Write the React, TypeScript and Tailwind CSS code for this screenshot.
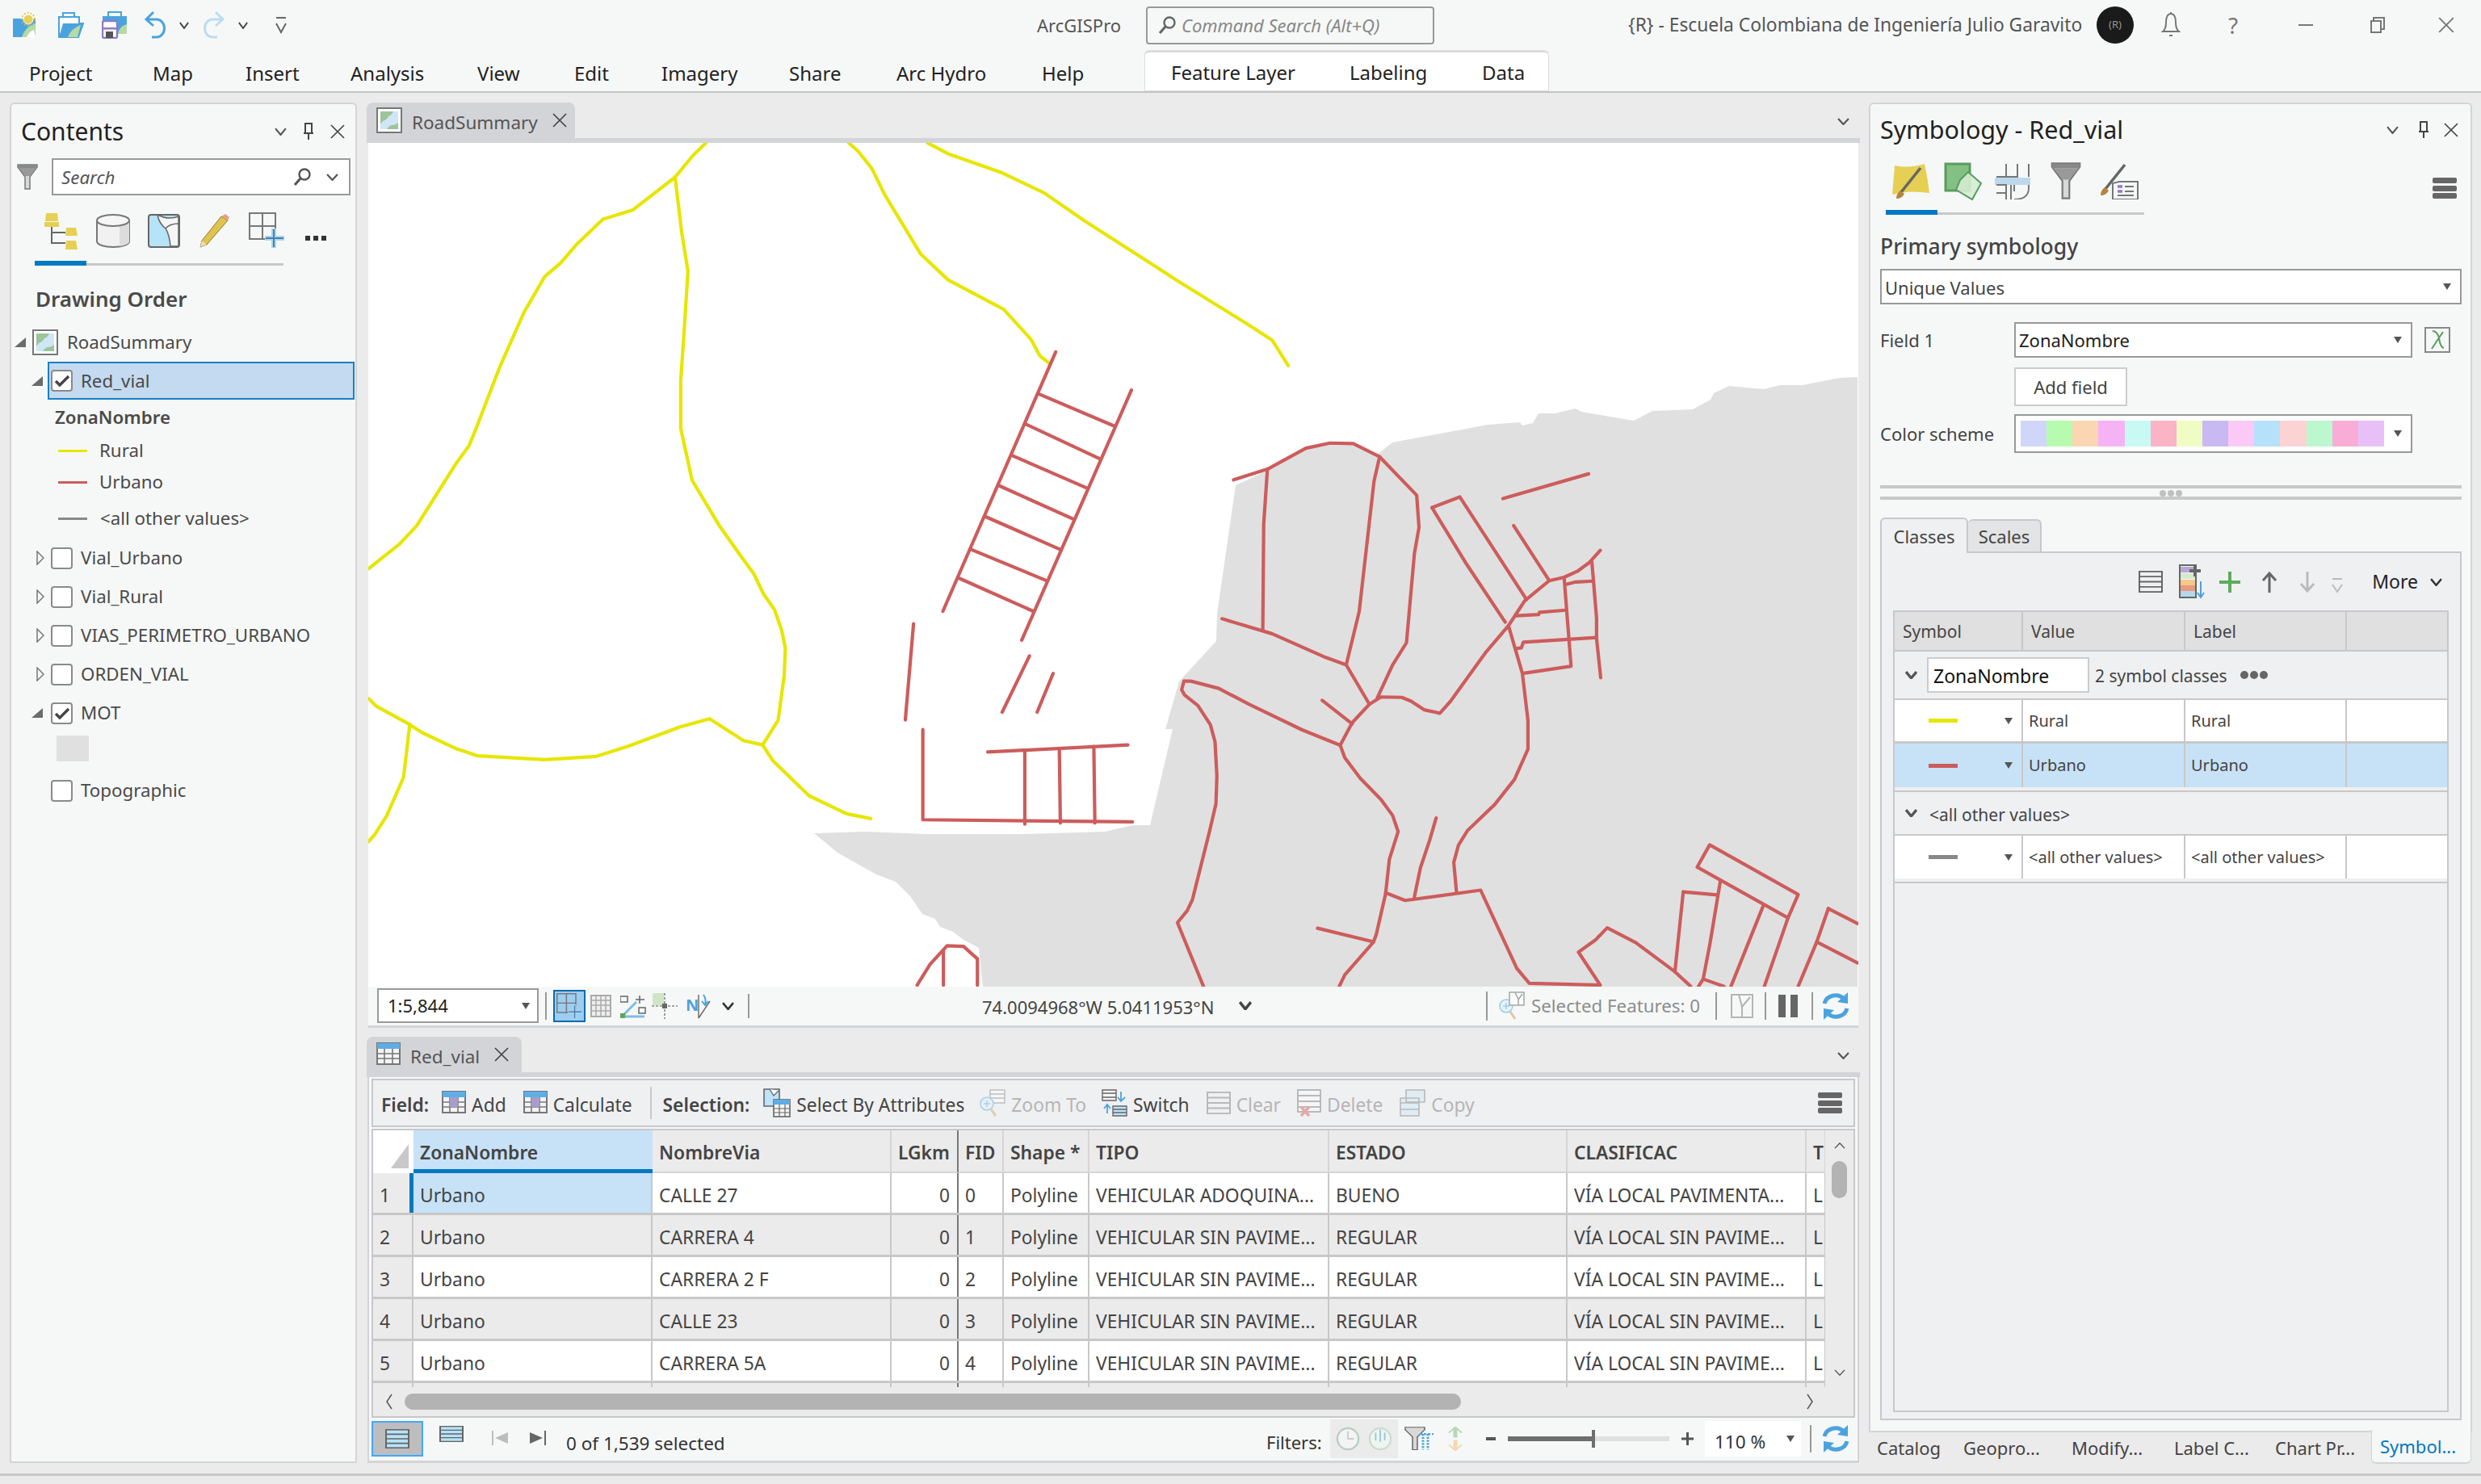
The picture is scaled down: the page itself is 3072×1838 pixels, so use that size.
import React from 'react';

type Pts = number[];
const pts = (p: Pts) => p.reduce((s, v, i) => s + v + (i % 2 ? ' ' : ','), '');

// map roads, in crop coordinates of the two map areas
const yellowA: Pts[] = [
  [10,805,70,760,103,727,178,615,205,580,218,550,265,435,312,335,352,270,383,245,415,210,465,165,523,148,605,88,640,48,665,25],
  [605,88,618,190,630,260,622,380,616,460,616,548,638,643,690,725,735,785,757,813,777,852,798,880,812,918,819,950,817,1000,805,1083,775,1128],
  [10,1043,25,1057,85,1088,115,1106,178,1134,222,1148,352,1155,452,1149,515,1130,615,1095,672,1080,738,1120,775,1128,795,1157,865,1221,938,1254,985,1263],
  [90,1090,78,1187,45,1258,22,1292,10,1305],
  [942,25,960,40,987,72,1012,120,1082,229,1135,276,1243,330,1296,385,1313,415,1333,430],
  [1095,25,1135,45,1240,80,1322,117,1400,168,1568,270],
];
const redA: Pts[] = [
  [1344,408,1125,883],[1491,478,1278,936],[1311,485,1458,544],[1285,540,1430,604],[1260,598,1406,658],[1234,653,1380,715],[1208,710,1353,770],[1180,770,1326,827],[1155,822,1300,883],
  [1068,906,1052,1082],[1293,965,1240,1068],[1339,997,1308,1068],
  [1086,1100,1086,1265,1493,1269],[1212,1141,1484,1128],[1284,1138,1284,1273],[1351,1135,1353,1271],[1418,1131,1420,1271],
  [1075,1568,1100,1530,1133,1496,1165,1497,1192,1520,1192,1568],[1126,1505,1126,1568],
];
const redB: Pts[] = [
  [222,367,295,342,378,293,430,281,480,282,537,313,617,403,622,478,612,540,595,748,565,800,532,877],
  [295,342,287,470,285,720],
  [197,692,305,727,415,780,465,800,493,675,525,370,537,313],
  [465,800,515,892],
  [115,838,110,858,116,870,145,895,172,940,182,980,186,1060,184,1125,170,1190,133,1350,122,1375,101,1403,157,1552],
  [115,838,130,838,190,855,255,892,370,952,452,988,478,935,515,892,540,875,585,876,605,885,633,905,667,913,690,885,765,772,815,708,832,680,850,650,903,603,935,595,965,580,990,560,1013,532],
  [413,883,478,938],
  [452,988,462,1017,495,1065,540,1115,565,1152,577,1190,558,1255,550,1335,530,1430,524,1448,462,1525,450,1552],
  [524,1448,403,1416],
  [550,1333,592,1351,755,1327,833,1510,860,1545,1013,1549,966,1472,1003,1443,1028,1415,1090,1450,1172,1516,1208,1552],
  [612,1343,625,1275,645,1210,659,1158],
  [703,1333,697,1262,707,1222,727,1187,785,1127,828,1068,857,997,857,930,845,820,815,708],
  [845,820,950,803,935,595],
  [650,432,710,407,854,647],[650,432,722,560,808,700],[803,411,988,353],[826,474,903,603],
  [938,612,960,606,997,604],[995,560,1005,690,1005,738,1014,830],[832,685,880,682,882,677,938,672],[830,762,843,760,847,747,1005,736],
  [1249,1221,1440,1337,1418,1392,1222,1273,1249,1221],[1272,1306,1250,1450,1235,1535,1225,1552],[1192,1331,1265,1338],[1192,1331,1174,1518],
  [1364,1365,1295,1552],[1418,1392,1367,1552],[1235,1535,1280,1552],[1505,1370,1568,1405],[1505,1370,1480,1448,1440,1552],[1480,1448,1568,1497],
];
const land = '1008,1032 1072,1030 1145,1033 1266,1033 1368,1030 1403,1022 1424,1022 1452,903 1443,903 1460,844 1506,794 1507,760 1530,601 1569,583 1618,556 1647,551 1675,551 1704,564 1724,548 1842,526 1882,523 1885,527 1898,524 1905,512 1925,512 1951,506 1958,510 2023,521 2046,509 2096,507 2118,495 2122,487 2141,478 2184,482 2204,477 2232,477 2278,468 2300,467 2300,1222 1217,1222 1212,1174 1193,1164 1180,1154 1164,1148 1158,1138 1142,1132 1127,1110 1109,1092 1085,1083 1037,1056';

const Road = ({ p, c, w = 4.2 }: { p: Pts; c: string; w?: number }) => (
  <polyline points={pts(p)} fill="none" stroke={c} strokeWidth={w} strokeLinejoin="round" strokeLinecap="round" vectorEffect="non-scaling-stroke" />
);

const MapView = () => (
  <svg width="1845" height="1045" viewBox="456 177 1845 1045" className="block bg-white">
    <polygon points={land} fill="#e0e0e0" />
    <g transform="translate(450 160) scale(0.6378 0.6761)">
      {yellowA.map((p, i) => <Road key={i} p={p} c="#e6e600" />)}
      {redA.map((p, i) => <Road key={i} p={p} c="#cd5c5c" />)}
    </g>
    <g transform="translate(1400 400) scale(0.574 0.5294)">
      <Road p={[87,-108,248,0,305,40,340,100]} c="#e6e600" />
      {redB.map((p, i) => <Road key={i} p={p} c="#cd5c5c" />)}
    </g>
  </svg>
);

// small glyph helpers
const Chev = ({ w = 14, h = 9, c = '#555', up = false, sw = 2 }: { w?: number; h?: number; c?: string; up?: boolean; sw?: number }) => (
  <svg width={w} height={h} viewBox="0 0 14 9" preserveAspectRatio="none" className="shrink-0">
    <polyline points={up ? '1,8 7,1 13,8' : '1,1 7,8 13,1'} fill="none" stroke={c} strokeWidth={sw} />
  </svg>
);
const Caret = ({ c = '#555' }: { c?: string }) => (
  <svg width="10" height="10" viewBox="0 0 10 10" className="shrink-0"><polygon points="0,1 10,1 5,9" fill={c} /></svg>
);
const Close = ({ s = 20, c = '#444' }: { s?: number; c?: string }) => (
  <svg width={s} height={s} viewBox="0 0 20 20" className="shrink-0"><path d="M2 2 L18 18 M18 2 L2 18" stroke={c} strokeWidth="1.7" /></svg>
);
const Pin = () => (
  <svg width="14" height="22" viewBox="0 0 14 22" className="shrink-0"><path d="M3 1 H11 V13 H3 Z M1 13 H13 M7 13 V21" fill="none" stroke="#444" strokeWidth="2" /></svg>
);
const Hamburger = () => (
  <svg width="30" height="26" viewBox="0 0 30 26" className="shrink-0"><rect y="0" width="30" height="7" rx="2" fill="#666" /><rect y="10" width="30" height="7" rx="2" fill="#666" /><rect y="19" width="30" height="7" rx="2" fill="#666" /></svg>
);
const Search = ({ c = '#555' }: { c?: string }) => (
  <svg width="24" height="24" viewBox="0 0 24 24" className="shrink-0"><circle cx="15" cy="9" r="6.5" fill="none" stroke={c} strokeWidth="2.4" /><path d="M10 14 L3 22" stroke={c} strokeWidth="3.2" /></svg>
);
const Refresh = () => (
  <svg width="34" height="34" viewBox="0 0 34 34" className="shrink-0"><path d="M3 14 A14 13 0 0 1 27 8 M31 20 A14 13 0 0 1 7 26" fill="none" stroke="#4aa3df" strokeWidth="5" /><polygon points="32,0 32,14 19,12" fill="#4aa3df" /><polygon points="2,34 2,20 15,22" fill="#4aa3df" /></svg>
);
const Funnel = ({ w = 26, h = 32 }: { w?: number; h?: number }) => (
  <svg width={w} height={h} viewBox="0 0 26 32" className="shrink-0"><polygon points="1,1 25,1 25,4 16,16 16,31 10,31 10,16 1,4" fill="#d8d8d8" stroke="#777" strokeWidth="1.5" /><polygon points="1,1 25,1 25,5 1,5" fill="#888" /><polygon points="2,5 24,5 16,15 10,15" fill="#999" /></svg>
);
const MapThumb = ({ s = 32, h = 32 }: { s?: number; h?: number }) => (
  <svg width={s} height={h} viewBox="0 0 32 32" preserveAspectRatio="none" className="shrink-0">
    <rect x="1" y="1" width="30" height="30" fill="#fff" stroke="#777" strokeWidth="2" />
    <rect x="5" y="5" width="22" height="22" fill="#cfe6f5" />
    <path d="M5 5 H21 Q19 10 15 11 Q13 15 8 17 L5 21 Z" fill="#9dc49b" />
    <path d="M27 27 H13 Q17 21 22 22 L27 19 Z" fill="#9dc49b" />
  </svg>
);
const TableIcon = ({ head = '#5eaee6', extra, dim = false, w = 30, h = 30 }: { head?: string; extra?: React.ReactNode; dim?: boolean; w?: number; h?: number }) => (
  <svg width={w} height={h} viewBox="0 0 30 30" className={dim ? 'shrink-0 opacity-40' : 'shrink-0'}>
    <rect x="1" y="1" width="28" height="26" fill="#f4f4f4" stroke="#777" strokeWidth="2" />
    <rect x="1" y="1" width="28" height="7" fill={head} />
    <path d="M1 14 H29 M1 20 H29 M10 8 V27 M20 8 V27" stroke="#777" strokeWidth="1.6" />
    {extra}
  </svg>
);
const Rows = ({ c = '#777', fill = 'none', dim = false, w = 30, h = 30, sw = 2 }: { c?: string; fill?: string; dim?: boolean; w?: number; h?: number; sw?: number }) => (
  <svg width={w} height={h} viewBox="0 0 30 30" preserveAspectRatio="none" className={dim ? 'shrink-0 opacity-45' : 'shrink-0'}>
    <rect x="1" y="1" width="28" height="28" fill={fill} stroke={c} strokeWidth={sw} />
    <path d="M1 8 H29 M1 15 H29 M1 22 H29" stroke={c} strokeWidth={sw} />
  </svg>
);

// quick access icons
const NewProject = () => (
  <svg width="32" height="32" viewBox="0 0 32 32" className="shrink-0">
    <rect x="1" y="8" width="28" height="23" fill="#4aa3df" /><path d="M12 31 Q16 18 29 14 V31 Z" fill="#b6d9a5" /><path d="M18 31 Q21 24 27 22 L29 31Z" fill="#fff" />
    <circle cx="20" cy="9" r="6" fill="#e8cf5a" stroke="#fff" strokeWidth="1" /><circle cx="20" cy="9" r="8" fill="none" stroke="#d8b93c" strokeWidth="1.4" strokeDasharray="2 2" />
  </svg>
);
const OpenProject = () => (
  <svg width="34" height="32" viewBox="0 0 34 32" className="shrink-0">
    <path d="M8 6 V1 H22 V6" fill="none" stroke="#4aa3df" strokeWidth="2" /><path d="M3 6 H28 V14 H33 L27 31 H3 Z" fill="#fff" stroke="#4aa3df" strokeWidth="2" />
    <path d="M3 31 L8 14 H33 L27 31 Z" fill="#4aa3df" /><path d="M14 31 Q18 20 30 16 L26 31 Z" fill="#b6d9a5" />
  </svg>
);
const SaveProject = () => (
  <svg width="32" height="34" viewBox="0 0 32 34" className="shrink-0">
    <path d="M8 6 V1 H24 V6" fill="none" stroke="#4aa3df" strokeWidth="2" /><rect x="1" y="6" width="30" height="22" fill="#4aa3df" />
    <path d="M20 28 Q22 18 31 16 V28 Z" fill="#b6d9a5" /><rect x="1" y="12" width="18" height="21" rx="2" fill="#fff" stroke="#8e7cc3" strokeWidth="2.4" />
    <rect x="2" y="20" width="16" height="2.5" fill="#8e7cc3" /><rect x="5" y="25" width="9" height="8" fill="#555" />
  </svg>
);
const Undo = ({ c, flip = false }: { c: string; flip?: boolean }) => (
  <svg width="28" height="36" viewBox="0 0 28 36" className={flip ? 'shrink-0 -scale-x-100' : 'shrink-0'}>
    <path d="M12 2 L3 11 L12 19 M3 11 H16 A9.5 11 0 0 1 16 33 H10" fill="none" stroke={c} strokeWidth="3" />
  </svg>
);

// contents tab icons
const DrawOrderIcon = () => (
  <svg width="44" height="46" viewBox="0 0 44 46" className="shrink-0">
    <path d="M9 14 V38 H26 M9 25 H26" fill="none" stroke="#666" strokeWidth="2" />
    <polygon points="2,1 16,1 17,11 1,11" fill="#e6cf53" /><rect x="0" y="12" width="18" height="6" fill="#e6cf53" />
    <polygon points="27,19 39,19 41,29 26,29" fill="#e6cf53" />
    <polygon points="27,35 39,35 41,46 26,46" fill="#e6cf53" />
  </svg>
);
const DbIcon = () => (
  <svg width="42" height="42" viewBox="0 0 42 42" className="shrink-0">
    <path d="M1 8 V34 A20 7 0 0 0 41 34 V8" fill="#f1f1f1" stroke="#777" strokeWidth="2" /><path d="M29 8 V40 Q41 38 41 34 V8 Z" fill="#dcdcdc" />
    <ellipse cx="21" cy="8" rx="20" ry="7" fill="#f6f6f6" stroke="#777" strokeWidth="2" />
  </svg>
);
const SheetMapIcon = () => (
  <svg width="40" height="42" viewBox="0 0 40 42" className="shrink-0">
    <rect x="1" y="1" width="38" height="40" rx="3" fill="#b5e3f7" stroke="#666" strokeWidth="2" />
    <path d="M12 1 Q14 12 22 18 Q27 26 28 40 H38 V3 Q26 8 12 1 Z" fill="#f5f5f5" stroke="#666" strokeWidth="1.5" />
    <path d="M22 18 Q27 12 38 12" fill="none" stroke="#666" strokeWidth="1.5" />
  </svg>
);
const PencilIcon = () => (
  <svg width="38" height="42" viewBox="0 0 38 42" className="shrink-0">
    <path d="M28 3 L36 8 L10 38 L2 41 L4 33 Z" fill="#e0c24e" stroke="#8a7a30" strokeWidth="1" /><path d="M28 3 L33 0 L38 4 L36 8 Z" fill="#e79f8a" /><path d="M2 41 L4 33 L10 38 Z" fill="#efdcb0" />
  </svg>
);
const GridPlus = ({ s = 44 }: { s?: number }) => (
  <svg width={s} height={s} viewBox="0 0 44 44" className="shrink-0">
    <rect x="1" y="1" width="32" height="32" fill="none" stroke="#777" strokeWidth="2" /><path d="M1 17 H33 M17 1 V33" stroke="#777" strokeWidth="2" />
    <path d="M31 20 V44 M20 32 H44" stroke="#a8d7f4" strokeWidth="6" /><path d="M31 21 V43 M21 32 H43" stroke="#4b7fa8" strokeWidth="2" />
  </svg>
);
const Brush = ({ x = 0, y = 0 }: { x?: number; y?: number }) => (
  <g transform={`translate(${x} ${y})`}>
    <path d="M7 34 L31 4" stroke="#666" strokeWidth="3.6" /><path d="M1 42 Q1 36 6 32 L11 36 Q8 42 1 42 Z" fill="#b5843f" />
  </g>
);

const Check = ({ on = false }: { on?: boolean }) => (
  <div className="w-[27px] h-[27px] shrink-0 rounded-[4px] border-2 border-[#8a8a8a] bg-white flex items-center justify-center">
    {on && <svg width="20" height="15" viewBox="0 0 20 15"><path d="M2 8 L7 13 L18 2" fill="none" stroke="#444" strokeWidth="3.4" /></svg>}
  </div>
);
const TreeOpen = () => <svg width="14" height="12" viewBox="0 0 14 12" className="shrink-0"><polygon points="14,0 14,12 0,12" fill="#6b6b6b" /></svg>;
const TreeClosed = () => <svg width="10" height="18" viewBox="0 0 10 18" className="shrink-0"><polygon points="1,1 9,9 1,17" fill="none" stroke="#777" strokeWidth="1.5" /></svg>;

const Layer = ({ name, on = false, open = false, arrow = true }: { name: string; on?: boolean; open?: boolean; arrow?: boolean }) => (
  <div className="h-[48px] flex items-center">
    <div className={open ? 'w-[49px] pr-[10px] flex justify-end shrink-0' : 'w-[49px] pr-[8px] flex justify-end shrink-0'}>{arrow && (open ? <TreeOpen /> : <TreeClosed />)}</div>
    <Check on={on} />
    <span className="ml-[10px]">{name}</span>
  </div>
);
const Legend = ({ c, label, h, ml = 15 }: { c: string; label: string; h: number; ml?: number }) => (
  <div className="flex items-center" style={{ height: h }}>
    <div className="ml-[58px] w-[36px] h-[3px] shrink-0" style={{ background: c }} />
    <span style={{ marginLeft: ml }}>{label}</span>
  </div>
);

const LeftPanel = () => (
  <div className="w-[430px] ml-[12px] h-[1685px] shrink-0 bg-[#f6f8f7] border-2 border-[#d3d4d8] rounded-t-[6px] text-[22.3px] text-[#4a4a4a] overflow-hidden">
    <div className="h-[67px] flex items-center pl-[12px] pr-[12px]">
      <span className="text-[30px] text-[#222] flex-1">Contents</span>
      <Chev w={15} h={10} />
      <div className="ml-[20px]"><Pin /></div>
      <div className="ml-[19px]"><Close /></div>
    </div>
    <div className="h-[46px] flex items-center pl-[7px]">
      <Funnel />
      <div className="ml-[17px] w-[370px] h-[46px] bg-white border-2 border-[#999] flex items-center pl-[10px] pr-[13px] shrink-0">
        <span className="italic text-[#555] flex-1 pt-[2px]">Search</span>
        <div className="-ml-[8px]"><Search /></div>
        <div className="ml-[18px]"><Chev w={15} h={9} /></div>
      </div>
    </div>
    <div className="h-[71px] pl-[41px] pt-[21px] flex items-start">
      <DrawOrderIcon />
      <div className="ml-[20px] mt-[2px]"><DbIcon /></div>
      <div className="ml-[22px] mt-[2px]"><SheetMapIcon /></div>
      <div className="ml-[23px] mt-[2px]"><PencilIcon /></div>
      <div className="ml-[24px]"><GridPlus /></div>
      <div className="ml-[26px] mt-[29px] flex gap-[4px]">
        <div className="w-[6px] h-[6px] bg-[#333]" /><div className="w-[6px] h-[6px] bg-[#333]" /><div className="w-[6px] h-[6px] bg-[#333]" />
      </div>
    </div>
    <div className="ml-[29px] w-[308px] h-[3px] mt-[13px] bg-[#c8c8c8] relative"><div className="absolute left-0 -top-[3px] w-[64px] h-[6px] bg-[#0079c1]" /></div>
    <div className="pl-[30px] mt-[23px] h-[36px] flex items-center text-[26px] font-semibold text-[#4a4a4a]">Drawing Order</div>
    <div className="mt-[20px] h-[32px] flex items-center pl-[4px]">
      <TreeOpen />
      <div className="ml-[8px]"><MapThumb /></div>
      <span className="ml-[11px]">RoadSummary</span>
    </div>
    <div className="mt-[8px] flex items-center h-[47px]">
      <div className="w-[39px] flex justify-end shrink-0"><TreeOpen /></div>
      <div className="w-[380px] ml-[6px] h-[47px] bg-[#c3daf0] border-2 border-[#1a80c4] flex items-center pl-[2px] shrink-0">
        <Check on />
        <span className="ml-[10px]">Red_vial</span>
      </div>
    </div>
    <div className="h-[44px] flex items-center pl-[54px] font-semibold">ZonaNombre</div>
    <Legend c="#e6e600" label="Rural" h={38} />
    <Legend c="#cd5c5c" label="Urbano" h={40} />
    <Legend c="#888" label="<all other values>" h={50} ml={16} />
    <Layer name="Vial_Urbano" />
    <Layer name="Vial_Rural" />
    <Layer name="VIAS_PERIMETRO_URBANO" />
    <Layer name="ORDEN_VIAL" />
    <Layer name="MOT" on open />
    <div className="h-[32px] ml-[56px] w-[40px] bg-[#e0e0e0] mt-[4px] mb-[12px]" />
    <Layer name="Topographic" arrow={false} />
  </div>
);

const TabStrip = ({ icon, label, w }: { icon: React.ReactNode; label: string; w: number }) => (
  <div className="h-[50px] flex flex-col">
    <div className="h-[44px] flex">
      <div className="h-[44px] bg-[#d3d4d8] rounded-t-[8px] flex items-center pl-[12px] text-[22.5px] text-[#555]" style={{ width: w }}>
        {icon}
        <span className="ml-[12px] pt-[5px]">{label}</span>
        <div className="ml-[17px]"><Close /></div>
      </div>
      <div className="flex-1" />
      <div className="pr-[13px] pt-[19px]"><Chev w={15} h={9} /></div>
    </div>
    <div className="h-[6px] bg-[#d3d4d8]" />
  </div>
);

const Sep = ({ h = 28, ml = 0, c = '#999' }: { h?: number; ml?: number; c?: string }) => (
  <div className="w-[2px] shrink-0" style={{ height: h, marginLeft: ml, background: c }} />
);

const MapBar = () => (
  <div className="h-[51px] mx-[2px] bg-[#f6f8f7] border-b-[3px] border-[#d3d4d8] flex items-center text-[22px] text-[#444] whitespace-nowrap">
    <div className="ml-[11px] w-[200px] h-[43px] bg-white border-2 border-[#999] flex items-center pl-[11px] pr-[9px] shrink-0 text-[#222]">
      <span className="flex-1">1:5,844</span><Caret />
    </div>
    <Sep ml={8} h={34} />
    <div className="ml-[8px] w-[40px] h-[40px] bg-[#9dcdf0] border-2 border-[#0a6cab] flex items-center justify-center shrink-0"><GridPlus s={32} /></div>
    <div className="ml-[6px]">
      <svg width="26" height="28" viewBox="0 0 26 28" className="block"><rect x="1" y="1" width="24" height="26" fill="#eee" stroke="#aaa" strokeWidth="2" /><path d="M1 7 H25 M1 13 H25 M1 20 H25 M7 1 V27 M13 1 V27 M19 1 V27" stroke="#aaa" strokeWidth="1.5" /></svg>
    </div>
    <div className="ml-[11px]">
      <svg width="32" height="30" viewBox="0 0 32 30" className="block"><rect x="0" y="3" width="9" height="7" fill="none" stroke="#666" strokeWidth="1.5" /><path d="M24 2 V12 M19 7 H30" stroke="#666" strokeWidth="1.5" /><path d="M2 28 L20 10 M3 28 H30" stroke="#7ebbe4" strokeWidth="3" /><rect x="0" y="24" width="6" height="6" fill="#5ba65b" /><rect x="23" y="17" width="8" height="7" fill="none" stroke="#666" strokeWidth="1.5" /></svg>
    </div>
    <div className="ml-[7px]">
      <svg width="32" height="32" viewBox="0 0 32 32" className="block"><rect x="1" y="0" width="14" height="15" fill="#cfe6c6" /><path d="M16 0 V32" stroke="#888" strokeWidth="1.6" strokeDasharray="3 2" /><path d="M0 16 H32" stroke="#888" strokeWidth="1.6" strokeDasharray="3 2" /><rect x="13" y="13" width="6" height="6" fill="#666" /></svg>
    </div>
    <div className="ml-[10px]">
      <svg width="32" height="32" viewBox="0 0 32 32" className="block"><text x="0" y="22" fontFamily="Noto Sans" fontSize="20" fontWeight="700" fill="#4aa3df">N</text><path d="M16 31 L30 10 M16 31 V2" stroke="#666" strokeWidth="1.4" fill="none" /><path d="M22 2 Q26 8 24 14 M20 10 L24 15 L28 10" fill="none" stroke="#4aa3df" strokeWidth="2" /></svg>
    </div>
    <div className="ml-[13px]"><Chev w={15} h={10} c="#333" sw={2.4} /></div>
    <Sep ml={17} h={30} />
    <span className="ml-[288px] w-[294px] shrink-0 pt-[4px]">74.0094968°W 5.0411953°N</span>
    <div className="ml-[24px]"><Chev w={16} h={11} c="#444" sw={3} /></div>
    <Sep ml={290} h={36} />
    <div className="ml-[14px] opacity-50">
      <svg width="32" height="36" viewBox="0 0 32 36" className="block"><circle cx="9" cy="18" r="8" fill="#d9eefb" stroke="#4aa3df" strokeWidth="1.6" /><path d="M5 18 H13 M9 14 V22" stroke="#4aa3df" strokeWidth="1.5" /><path d="M14 25 L20 34" stroke="#c79a5b" strokeWidth="3" /><path d="M13 1 H31 V17 H13 Z M20 1 L24 10 V17 M24 10 L29 3" fill="#fff" stroke="#555" strokeWidth="1.5" /></svg>
    </div>
    <span className="ml-[8px] w-[214px] shrink-0 text-[#8d8d8d] text-[22.3px]">Selected Features: 0</span>
    <Sep ml={14} h={34} />
    <div className="ml-[17px] opacity-60">
      <svg width="28" height="30" viewBox="0 0 28 30" className="block"><path d="M1 1 H27 V29 H1 Z M10 1 L14 16 V29 M14 16 L24 4" fill="none" stroke="#888" strokeWidth="2" /></svg>
    </div>
    <Sep ml={14} h={34} />
    <div className="ml-[15px] flex gap-[6px]"><div className="w-[9px] h-[28px] bg-[#666]" /><div className="w-[9px] h-[28px] bg-[#666]" /></div>
    <Sep ml={17} h={34} />
    <div className="ml-[11px]"><Refresh /></div>
  </div>
);

const ToolBtn = ({ icon, label, ml = 0, dim = false }: { icon: React.ReactNode; label: string; ml?: number; dim?: boolean }) => (
  <div className="flex items-center shrink-0" style={{ marginLeft: ml }}>
    {icon}
    <span className={dim ? 'ml-[7px] pt-[6px] text-[#b5b5b5]' : 'ml-[7px] pt-[6px] text-[#444]'}>{label}</span>
  </div>
);

const cols = [50, 296, 296, 83, 56, 106, 297, 295, 296, 24];
const rows = [
  ['1', 'Urbano', 'CALLE 27', '0', '0', 'Polyline', 'VEHICULAR ADOQUINA...', 'BUENO', 'VÍA LOCAL PAVIMENTA...', 'L'],
  ['2', 'Urbano', 'CARRERA 4', '0', '1', 'Polyline', 'VEHICULAR SIN PAVIME...', 'REGULAR', 'VÍA LOCAL SIN PAVIME...', 'L'],
  ['3', 'Urbano', 'CARRERA 2 F', '0', '2', 'Polyline', 'VEHICULAR SIN PAVIME...', 'REGULAR', 'VÍA LOCAL SIN PAVIME...', 'L'],
  ['4', 'Urbano', 'CALLE 23', '0', '3', 'Polyline', 'VEHICULAR SIN PAVIME...', 'REGULAR', 'VÍA LOCAL SIN PAVIME...', 'L'],
  ['5', 'Urbano', 'CARRERA 5A', '0', '4', 'Polyline', 'VEHICULAR SIN PAVIME...', 'REGULAR', 'VÍA LOCAL SIN PAVIME...', 'L'],
];
const heads = ['', 'ZonaNombre', 'NombreVia', 'LGkm', 'FID', 'Shape *', 'TIPO', 'ESTADO', 'CLASIFICAC', 'T'];

const DataGrid = () => (
  <div className="mx-[3px] h-[358px] border-2 border-[#c8c8cc] bg-[#ebebeb] flex flex-col overflow-hidden">
    <div className="flex h-[318px]">
      <div className="w-[1798px] shrink-0 overflow-hidden">
        <div className="flex h-[53px] font-semibold text-[#444]">
          {heads.map((h, i) => (
            <div key={i} className={i === 0 ? 'bg-white flex items-end justify-end pr-[6px] pb-[6px]' : i === 1 ? 'bg-[#c7e2f6] border-b-[5px] border-[#0079c1] flex items-center pl-[8px] pt-[8px]' : i === 3 ? 'bg-[#ebebeb] border-r-2 border-[#777] border-b-2 border-b-[#d5d5d5] flex items-center pl-[8px] pt-[6px]' : 'bg-[#ebebeb] border-r-2 border-[#d5d5d5] border-b-2 flex items-center pl-[8px] pt-[6px]'} style={{ width: cols[i], flexShrink: 0 }}>
              {i === 0 ? <svg width="22" height="30" viewBox="0 0 22 30"><polygon points="22,0 22,30 0,30" fill="#c8c8c8" /></svg> : h}
            </div>
          ))}
        </div>
        {rows.map((r, ri) => (
          <div key={ri} className={ri % 2 === 0 ? 'flex h-[52px] bg-white border-b-[3px] border-[#c8c8c8]' : 'flex h-[52px] bg-[#ebebeb] border-b-[3px] border-[#c8c8c8]'}>
            {r.map((c, i) => (
              <div key={i} className={(i === 0 ? 'bg-[#ebebeb] border-[#c8c8c8] pl-[8px] ' : i === 3 ? 'justify-end pr-[9px] border-[#777] ' : 'border-[#c8c8c8] pl-[8px] ') + (ri === 0 && i < 2 ? 'bg-[#c7e2f6] ' : '') + (ri === 0 && i === 0 ? 'border-r-[5px] border-r-[#0079c1] ' : 'border-r-2 ') + 'pt-[7px] flex items-center whitespace-nowrap overflow-hidden text-[#444]'} style={{ width: cols[i], flexShrink: 0 }}>
                {c}
              </div>
            ))}
          </div>
        ))}
        <div className="flex h-[5px]">
          {cols.map((w, i) => <div key={i} className={i === 3 ? 'border-r-2 border-[#777]' : 'border-r-2 border-[#c8c8c8]'} style={{ width: w, flexShrink: 0 }} />)}
        </div>
      </div>
      <div className="flex-1 flex flex-col items-center pt-[15px]">
        <Chev w={14} h={8} up c="#555" sw={1.5} />
        <div className="w-[19px] h-[46px] mt-[15px] rounded-full bg-[#b3b3b3]" />
        <div className="flex-1" />
        <div className="mb-[14px]"><Chev w={14} h={8} c="#555" sw={1.5} /></div>
      </div>
    </div>
    <div className="flex-1 flex items-center pl-[15px]">
      <svg width="9" height="20" viewBox="0 0 9 20"><polyline points="8,1 2,10 8,19" fill="none" stroke="#555" strokeWidth="1.5" /></svg>
      <div className="ml-[15px] w-[1308px] h-[20px] rounded-full bg-[#b3b3b3]" />
      <div className="ml-[428px]">
        <svg width="9" height="20" viewBox="0 0 9 20"><polyline points="1,1 7,10 1,19" fill="none" stroke="#555" strokeWidth="1.5" /></svg>
      </div>
    </div>
  </div>
);

const TablePane = () => (
  <div className="mx-[1px] border-b-[3px] border-x-2 border-[#d3d4d8] bg-[#f6f8f7] text-[22.8px] pt-[2px] h-[479px] flex flex-col">
    <div className="mx-[3px] h-[60px] border-2 border-[#c8c8cc] bg-[#eff0f2] flex items-center pl-[10px] shrink-0">
      <span className="font-semibold text-[#444] pt-[6px]">Field:</span>
      <ToolBtn ml={16} icon={<TableIcon head="#5eaee6" extra={<rect x="10" y="8" width="10" height="12" fill="#a99ccc" />} />} label="Add" />
      <ToolBtn ml={21} icon={<TableIcon head="#5eaee6" extra={<rect x="10" y="8" width="10" height="12" fill="#a99ccc" />} />} label="Calculate" />
      <Sep ml={22} h={40} c="#c8c8cc" />
      <span className="ml-[14px] font-semibold text-[#444] pt-[6px]">Selection:</span>
      <ToolBtn ml={17} icon={<svg width="34" height="36" viewBox="0 0 34 36"><path d="M1 1 H20 V22 H1 Z" fill="#bfe3f8" stroke="#666" strokeWidth="1.6" /><path d="M8 1 L13 9 L19 3" fill="#fff" stroke="#666" strokeWidth="1.4" /><rect x="13" y="14" width="20" height="21" fill="#f4f4f4" stroke="#666" strokeWidth="1.6" /><rect x="13" y="14" width="20" height="6" fill="#5eaee6" /><path d="M13 25 H33 M13 30 H33 M20 20 V35 M27 20 V35" stroke="#666" strokeWidth="1.2" /></svg>} label="Select By Attributes" />
      <ToolBtn ml={18} dim icon={<svg width="33" height="34" viewBox="0 0 33 34" className="opacity-40"><path d="M14 1 H32 V17 H14 Z M14 6 H32 M14 11 H32" fill="#fff" stroke="#777" strokeWidth="1.5" /><circle cx="10" cy="18" r="8" fill="#d9eefb" stroke="#4aa3df" strokeWidth="1.6" /><path d="M6 18 H14 M10 14 V22" stroke="#4aa3df" strokeWidth="1.4" /><path d="M15 25 L21 33" stroke="#c79a5b" strokeWidth="3" /></svg>} label="Zoom To" />
      <ToolBtn ml={19} icon={<svg width="32" height="34" viewBox="0 0 32 34"><path d="M1 1 H18 V14 H1 Z M1 5 H18 M1 10 H18" fill="#f4f4f4" stroke="#666" strokeWidth="1.4" /><path d="M14 21 H31 V33 H14 Z M14 25 H31 M14 29 H31" fill="#bfe3f8" stroke="#666" strokeWidth="1.4" /><path d="M24 3 V14 M20 10 L24 15 L29 10 M7 30 V20 M3 24 L7 19 L11 24" fill="none" stroke="#4aa3df" strokeWidth="1.8" /></svg>} label="Switch" />
      <ToolBtn ml={21} dim icon={<Rows dim h={28} />} label="Clear" />
      <ToolBtn ml={20} dim icon={<svg width="30" height="34" viewBox="0 0 30 34" className="opacity-45"><path d="M1 1 H29 V28 H1 Z M1 8 H29 M1 15 H29 M1 22 H29" fill="#fff" stroke="#777" strokeWidth="2" /><path d="M5 22 L15 33 M15 22 L5 33" stroke="#d9534f" strokeWidth="3.5" /></svg>} label="Delete" />
      <ToolBtn ml={21} dim icon={<svg width="32" height="34" viewBox="0 0 32 34" className="opacity-45"><path d="M8 1 H31 V16 H8 Z M1 11 H24 V33 H1 Z M1 17 H24 M1 25 H24" fill="#cfe8f7" stroke="#777" strokeWidth="1.6" /></svg>} label="Copy" />
      <div className="flex-1" />
      <div className="mr-[14px]"><Hamburger /></div>
    </div>
    <div className="h-[2px] shrink-0" />
    <DataGrid />
    <div className="flex-1 flex items-center text-[#333]">
      <div className="ml-[3px] w-[64px] h-[44px] bg-[#bdbdc0] border-2 border-[#3fa9f5] flex items-center justify-center shrink-0">
        <Rows c="#666" fill="#b5e3f7" w={30} h={24} />
      </div>
      <div className="ml-[20px] -mt-[12px]"><Rows c="#666" fill="#b5e3f7" w={30} h={20} /></div>
      <div className="ml-[35px] flex items-center -mt-[2px] opacity-40"><div className="w-[2px] h-[18px] bg-[#666]" /><svg width="16" height="14" viewBox="0 0 16 24" preserveAspectRatio="none" className="ml-[2px]"><polygon points="16,0 16,24 0,12" fill="#666" /></svg></div>
      <div className="ml-[27px] flex items-center -mt-[2px]"><svg width="16" height="14" viewBox="0 0 16 24" preserveAspectRatio="none"><polygon points="0,0 0,24 16,12" fill="#666" /></svg><div className="w-[2px] h-[18px] bg-[#666] ml-[2px]" /></div>
      <span className="ml-[25px] w-[250px] shrink-0 pt-[10px] text-[22.5px]">0 of 1,539 selected</span>
      <span className="ml-[617px] w-[70px] shrink-0 pt-[8px] text-[22px]">Filters:</span>
      <div className="ml-[9px] w-[84px] h-[48px] bg-[#ebebeb] flex items-center justify-center gap-[10px] shrink-0">
        <svg width="30" height="30" viewBox="0 0 32 32"><circle cx="16" cy="16" r="14" fill="#f4f4f4" stroke="#b5cfc0" strokeWidth="2.4" /><path d="M16 6 V16 H24" fill="none" stroke="#ccc" strokeWidth="2" /></svg>
        <svg width="30" height="30" viewBox="0 0 32 32"><circle cx="16" cy="16" r="14" fill="#eef5ef" stroke="#c8dcd0" strokeWidth="2.4" /><path d="M10 8 V18 M16 4 V20 M22 8 V18" stroke="#9ec4de" strokeWidth="2" /></svg>
      </div>
      <div className="ml-[8px]">
        <svg width="38" height="30" viewBox="0 0 38 40" preserveAspectRatio="none" className="block"><polygon points="1,1 25,1 25,5 16,17 16,38 10,38 10,17 1,5" fill="#d8d8d8" stroke="#666" strokeWidth="1.5" /><path d="M19 12 H36 M23 12 V38 M29 12 V38" stroke="#4aa3df" strokeWidth="3" strokeDasharray="3 2" /></svg>
      </div>
      <div className="ml-[15px]">
        <svg width="20" height="30" viewBox="0 0 20 40" preserveAspectRatio="none" className="block"><path d="M10 2 V18" stroke="#b7d8b7" strokeWidth="5" /><path d="M2 10 L10 1 L18 10" fill="none" stroke="#b7d8b7" strokeWidth="2.5" /><path d="M10 22 V38" stroke="#f2d9b3" strokeWidth="5" /><path d="M2 30 L10 39 L18 30" fill="none" stroke="#f2d9b3" strokeWidth="2.5" /></svg>
      </div>
      <div className="ml-[28px] w-[12px] h-[4px] bg-[#555] shrink-0" />
      <div className="ml-[15px] w-[200px] h-[6px] bg-[#e0e0e0] relative shrink-0"><div className="w-[105px] h-[6px] bg-[#6e6e6e]" /><div className="absolute left-[104px] -top-[8px] w-[4px] h-[22px] bg-[#6e6e6e]" /></div>
      <svg width="15" height="16" viewBox="0 0 15 16" className="ml-[15px] shrink-0"><path d="M7.5 0 V16" stroke="#555" strokeWidth="3" /><path d="M0 8 H15" stroke="#555" strokeWidth="3" /></svg>
      <div className="ml-[14px] w-[119px] h-[44px] bg-white flex items-center pl-[12px] pr-[8px] shrink-0"><span className="flex-1 pt-[6px] text-[22.5px]">110 %</span><Caret /></div>
      <Sep ml={11} h={34} />
      <div className="ml-[13px]"><Refresh /></div>
    </div>
  </div>
);

const Center = () => (
  <div className="w-[1849px] ml-[12px] shrink-0 flex flex-col">
    <TabStrip icon={<MapThumb s={32} h={32} />} label="RoadSummary" w={258} />
    <div className="mx-[2px]"><MapView /></div>
    <MapBar />
    <div className="h-[11px]" />
    <TabStrip icon={<TableIcon w={30} h={30} />} label="Red_vial" w={192} />
    <TablePane />
  </div>
);

const Field = ({ children, w, ml = 0 }: { children: React.ReactNode; w: number; ml?: number }) => (
  <div className="h-[44px] bg-white border-2 border-[#999] flex items-center pl-[4px] pr-[11px] shrink-0" style={{ width: w, marginLeft: ml }}>
    <div className="flex-1 flex items-center">{children}</div>
    <Caret />
  </div>
);

const swatches = ['#d0d6fa', '#b7fbb0', '#fbd6b2', '#f5b3f5', '#c8faf3', '#fbb3c6', '#effcc3', '#c8b9f3', '#fbc9f5', '#b5e1fb', '#fbd3d3', '#bcf7d0', '#f9add6', '#e8c0f7'];
const symCols = [159, 201, 200];

const SymRow = ({ c, v, sel = false, h = 53 }: { c: string; v: string; sel?: boolean; h?: number }) => (
  <div className={sel ? 'flex bg-[#c7e2f6]' : 'flex bg-white'} style={{ height: h }}>
    <div className="flex items-center border-r-2 border-[#c8c8c8] shrink-0" style={{ width: symCols[0] }}>
      <div className="ml-[42px] w-[36px] h-[5px] shrink-0" style={{ background: c }} />
      <div className="ml-[58px]"><Caret /></div>
    </div>
    <div className="flex items-center border-r-2 border-[#c8c8c8] pl-[7px] shrink-0" style={{ width: symCols[1] }}>{v}</div>
    <div className="flex items-center border-r-2 border-[#c8c8c8] pl-[7px] shrink-0" style={{ width: symCols[2] }}>{v}</div>
    <div className="flex-1" />
  </div>
);

const Right = () => (
  <div className="w-[747px] ml-[11px] shrink-0 h-[1685px] flex flex-col">
    <div className="h-[1645px] bg-[#f6f8f7] border-2 border-b-0 border-[#d3d4d8] rounded-t-[6px] overflow-hidden text-[22px] text-[#444] flex flex-col pl-[12px]">
      <div className="h-[64px] flex items-center pr-[14px]">
        <span className="text-[30.5px] text-[#222] flex-1 whitespace-nowrap">Symbology - Red_vial</span>
        <Chev w={15} h={10} />
        <div className="ml-[24px]"><Pin /></div>
        <div className="ml-[17px]"><Close /></div>
      </div>
      <div className="h-[66px] flex items-start pl-[15px] pt-[8px]">
        <svg width="46" height="46" viewBox="0 0 46 46" className="shrink-0"><path d="M3 4 Q20 8 40 2 Q44 20 46 38 Q20 34 0 40 Z" fill="#e6cf53" /><Brush x={4} y={3} /></svg>
        <svg width="48" height="48" viewBox="0 0 48 48" className="ml-[18px] shrink-0"><rect x="2" y="2" width="30" height="33" fill="#82c083" stroke="#5a9c5e" strokeWidth="3" /><path d="M20 22 L30 12 L46 26 L35 46 L15 34 Z" fill="#d5ecd3" fillOpacity="0.9" stroke="#5a9c5e" strokeWidth="2" /></svg>
        <svg width="46" height="46" viewBox="0 0 46 46" className="ml-[15px] shrink-0"><rect x="0" y="19" width="44" height="9" fill="#bcd8ec" /><path d="M14 2 V18 M28 2 V18 H2 M42 2 V18 M2 28 H14 V46 M2 38 H14 M20 28 V46 M24 28 V36 M42 28 V32 Q42 46 24 46" fill="none" stroke="#777" strokeWidth="2" /></svg>
        <div className="ml-[21px]"><Funnel w={42} h={46} /></div>
        <svg width="48" height="46" viewBox="0 0 48 46" className="ml-[21px] shrink-0"><Brush x={0} y={-1} /><path d="M16 26 L16 46 H47 V24 H24 Z" fill="#f6f8f7" stroke="#777" strokeWidth="2" /><path d="M22 30 H28 M22 36 H28" stroke="#8e7cc3" strokeWidth="3.5" /><path d="M31 30 H42 M31 36 H42 M22 41 H42" stroke="#777" strokeWidth="2" /></svg>
        <div className="flex-1" />
        <div className="mt-[19px] mr-[17px]"><Hamburger /></div>
      </div>
      <div className="ml-[7px] w-[320px] h-[3px] mt-[4px] bg-[#c8c8c8] relative shrink-0"><div className="absolute left-0 -top-[3px] w-[64px] h-[6px] bg-[#0079c1]" /></div>
      <div className="mt-[23px] h-[34px] flex items-center text-[26.5px] font-medium text-[#444]">Primary symbology</div>
      <div className="mt-[10px] w-[720px] shrink-0"><Field w={720}><span className="pt-[2px]">Unique Values</span></Field></div>
      <div className="mt-[22px] flex items-center h-[44px]">
        <span className="w-[166px] shrink-0">Field 1</span>
        <Field w={493}><span className="text-[#222]">ZonaNombre</span></Field>
        <div className="ml-[15px] w-[32px] h-[32px] border-2 border-[#888] flex items-center justify-center shrink-0">
          <svg width="18" height="24" viewBox="0 0 18 24"><path d="M3 1 Q9 1 11 10 Q13 22 17 22 M16 2 L2 23" fill="none" stroke="#5a9c5e" strokeWidth="2" /></svg>
        </div>
      </div>
      <div className="mt-[12px] ml-[166px] w-[140px] h-[48px] bg-white border-2 border-[#ccc] flex items-center justify-center shrink-0">Add field</div>
      <div className="mt-[10px] flex items-center h-[48px]">
        <span className="w-[166px] shrink-0">Color scheme</span>
        <div className="w-[493px] h-[48px] bg-white border-2 border-[#999] flex items-center pl-[6px] pr-[11px] shrink-0">
          <div className="w-[450px] h-[32px] flex shrink-0">
            {swatches.map((c) => <div key={c} className="flex-1" style={{ background: c }} />)}
          </div>
          <div className="flex-1" />
          <Caret />
        </div>
      </div>
      <div className="mt-[40px] w-[720px] h-[4px] bg-[#c8c8c8] shrink-0" />
      <div className="flex justify-center w-[720px] h-[10px] gap-[2px] pt-[2px] shrink-0">
        <div className="w-[8px] h-[8px] rounded-full bg-[#c0c0c0]" /><div className="w-[8px] h-[8px] rounded-full bg-[#c0c0c0]" /><div className="w-[8px] h-[8px] rounded-full bg-[#c0c0c0]" />
      </div>
      <div className="w-[720px] h-[4px] bg-[#c8c8c8] shrink-0" />
      <div className="mt-[20px] flex items-end h-[44px] text-[22px] w-[720px] shrink-0">
        <div className="w-[109px] h-[44px] bg-[#eff0f2] border-2 border-b-0 border-[#c8c8cc] rounded-t-[6px] flex items-center justify-center relative top-[2px] z-10">Classes</div>
        <div className="w-[91px] h-[40px] bg-[#e3e4e6] border-2 border-b-0 border-l-0 border-[#c8c8cc] rounded-t-[6px] flex items-center justify-center">Scales</div>
      </div>
      <div className="w-[720px] h-[1076px] bg-[#eff0f2] border-2 border-[#c8c8cc] flex flex-col shrink-0">
        <div className="h-[71px] flex items-center justify-end pr-[22px]">
          <Rows c="#666" w={30} h={27} />
          <svg width="32" height="46" viewBox="0 0 32 46" className="ml-[20px] shrink-0"><rect x="1" y="2" width="20" height="40" fill="#f4f4f4" stroke="#666" strokeWidth="2" /><rect x="2" y="4" width="18" height="7" fill="#b5a8d6" /><rect x="2" y="12" width="18" height="7" fill="#d5e8d0" /><rect x="2" y="20" width="18" height="7" fill="#f5c98a" /><rect x="2" y="27" width="18" height="7" fill="#e8997f" /><rect x="2" y="34" width="18" height="7" fill="#b5d8ec" /><path d="M20 2 V16 M13 9 H27" stroke="#666" strokeWidth="4" /><path d="M27 22 V40 M23 36 L27 42 L31 36" fill="none" stroke="#4aa3df" strokeWidth="2" /></svg>
          <svg width="26" height="26" viewBox="0 0 26 26" className="ml-[18px] shrink-0"><path d="M13 0 V26 M0 13 H26" stroke="#5dab5d" strokeWidth="4" /></svg>
          <svg width="20" height="26" viewBox="0 0 20 26" className="ml-[26px] shrink-0"><path d="M10 3 V26 M2 11 L10 2 L18 11" fill="none" stroke="#666" strokeWidth="3" /></svg>
          <svg width="20" height="26" viewBox="0 0 20 26" className="ml-[27px] shrink-0"><path d="M10 0 V23 M2 15 L10 24 L18 15" fill="none" stroke="#bbb" strokeWidth="3" /></svg>
          <svg width="14" height="20" viewBox="0 0 14 20" className="ml-[20px] mt-[8px] shrink-0"><path d="M1 2 H13 M1 9 L7 18 L13 9" fill="none" stroke="#bbb" strokeWidth="2" /></svg>
          <span className="ml-[36px] text-[23px] text-[#222]">More</span>
          <div className="ml-[15px]"><Chev w={15} h={10} c="#333" sw={2.2} /></div>
        </div>
        <div className="mx-[14px] flex-1 border-2 border-[#c8c8cc] flex flex-col text-[20px] mb-[8px]">
          <div className="flex h-[49px] bg-[#e0e0e0] border-b-2 border-[#c8c8c8] text-[21px]">
            {['Symbol', 'Value', 'Label', ''].map((h, i) => (
              <div key={h} className={i === 3 ? 'flex-1 flex items-center' : 'border-r-2 border-[#c8c8c8] flex items-center pl-[10px] pt-[2px] shrink-0'} style={i === 3 ? {} : { width: symCols[i] }}>{h}</div>
            ))}
          </div>
          <div className="h-[60px] flex items-center pl-[13px] border-b-2 border-[#c8c8c8] text-[21px]">
            <Chev w={15} h={10} c="#555" sw={3} />
            <div className="ml-[12px] w-[201px] h-[44px] bg-white border-2 border-[#ccc] flex items-center pl-[6px] pt-[2px] text-[23px] text-[#111] shrink-0">ZonaNombre</div>
            <span className="ml-[7px] pt-[4px]">2 symbol classes</span>
            <div className="ml-[16px] flex gap-[2px]">
              <div className="w-[10px] h-[10px] rounded-full bg-[#666]" /><div className="w-[10px] h-[10px] rounded-full bg-[#666]" /><div className="w-[10px] h-[10px] rounded-full bg-[#666]" />
            </div>
          </div>
          <div className="border-b-[3px] border-[#c8c8c8]"><SymRow c="#e6e600" v="Rural" h={51} /></div>
          <SymRow c="#cd5c5c" v="Urbano" sel h={54} />
          <div className="h-[4px]" />
          <div className="h-[56px] flex items-center pl-[13px] border-y-2 border-[#c8c8c8] text-[21px]">
            <Chev w={15} h={10} c="#555" sw={3} />
            <span className="ml-[15px] pt-[6px]">&lt;all other values&gt;</span>
          </div>
          <SymRow c="#888" v="<all other values>" h={53} />
          <div className="h-[4px]" />
          <div className="h-[2px] bg-[#c8c8c8]" />
        </div>
      </div>
    </div>
    <div className="h-[40px] border-t-2 border-[#d3d4d8] flex items-center text-[22px] text-[#444] pl-[10px] relative">
      <span className="w-[107px]">Catalog</span>
      <span className="w-[134px]">Geopro...</span>
      <span className="w-[127px]">Modify...</span>
      <span className="w-[125px]">Label C...</span>
      <span className="w-[119px]">Chart Pr...</span>
      <div className="w-[124px] h-[42px] -mt-[2px] bg-[#f6f8f7] rounded-b-[6px] border-b-2 border-x border-[#d3d4d8] flex items-center pl-[10px] text-[#0079c1]">Symbol...</div>
    </div>
  </div>
);

const TitleBar = () => (
  <div className="h-[62px] flex items-center bg-[#f6f8f7] text-[22px] text-[#555]">
    <div className="w-[1284px] flex items-center pl-[15px] shrink-0">
      <NewProject />
      <div className="ml-[23px]"><OpenProject /></div>
      <div className="ml-[22px]"><SaveProject /></div>
      <div className="ml-[20px]"><Undo c="#4aa3df" /></div>
      <div className="ml-[16px]"><Chev w={12} h={9} c="#444" sw={2} /></div>
      <div className="ml-[17px]"><Undo c="#bcdcf2" flip /></div>
      <div className="ml-[16px]"><Chev w={12} h={9} c="#444" sw={2} /></div>
      <div className="ml-[33px]">
        <svg width="16" height="22" viewBox="0 0 16 22" className="block"><path d="M2 2 H14" stroke="#666" strokeWidth="2" /><path d="M2 9 L8 20 L14 9" fill="none" stroke="#666" strokeWidth="2" /></svg>
      </div>
    </div>
    <span className="w-[135px] shrink-0">ArcGISPro</span>
    <div className="w-[357px] h-[47px] rounded-[4px] border-2 border-[#999] flex items-center pl-[12px] shrink-0">
      <Search c="#666" />
      <span className="ml-[6px] italic text-[#888]">Command Search (Alt+Q)</span>
    </div>
    <span className="ml-[240px] w-[566px] shrink-0 whitespace-nowrap text-[22.8px]">{'{R} - Escuela Colombiana de Ingeniería Julio Garavito'}</span>
    <div className="ml-[14px] w-[46px] h-[46px] rounded-full bg-[#1a1a1a] flex items-center justify-center text-[13px] text-[#999] shrink-0">(R)</div>
    <svg width="24" height="34" viewBox="0 0 24 34" className="ml-[34px] shrink-0"><path d="M2 25 Q6 22 6 14 Q6 3 12 3 Q18 3 18 14 Q18 22 22 25 Z M12 3 V1 M10 30 H14" fill="none" stroke="#777" strokeWidth="2" /></svg>
    <span className="ml-[55px] w-[20px] text-center text-[#777] text-[28px]">?</span>
    <div className="ml-[71px] w-[18px] h-[2px] bg-[#777] shrink-0" />
    <svg width="18" height="20" viewBox="0 0 18 20" className="ml-[71px] shrink-0"><path d="M1 5 H13 V19 H1 Z M4 5 V1 H17 V15 H13" fill="none" stroke="#777" strokeWidth="2" /></svg>
    <div className="ml-[65px]"><Close s={22} c="#777" /></div>
  </div>
);

const menu = [['Project', 153], ['Map', 115], ['Insert', 130], ['Analysis', 157], ['View', 120], ['Edit', 108], ['Imagery', 158], ['Share', 133], ['Arc Hydro', 180], ['Help', 127]] as const;

const RibbonTabs = () => (
  <div className="h-[53px] flex items-end bg-[#f6f8f7] border-b-[2px] border-[#c4c4c8] text-[24px] text-[#222]">
    <div className="flex items-center h-[51px] pt-[6px] pl-[36px] w-[1417px] shrink-0">
      {menu.map(([m, w]) => <span key={m} className="shrink-0" style={{ width: w }}>{m}</span>)}
    </div>
    <div className="w-[501px] h-[51px] pt-[3px] bg-white border border-[#dcdcdc] border-t-[3px] rounded-t-[6px] flex items-center pl-[32px] shrink-0">
      <span className="w-[221px]">Feature Layer</span>
      <span className="w-[164px]">Labeling</span>
      <span>Data</span>
    </div>
  </div>
);

export default function App() {
  return (
    <div className="w-[3072px] h-[1838px] bg-[#ebebeb] overflow-hidden font-['Noto_Sans',sans-serif] flex flex-col">
      <TitleBar />
      <RibbonTabs />
      <div className="flex mt-[12px] h-[1685px]">
        <LeftPanel />
        <Center />
        <Right />
      </div>
      <div className="mt-[13px] h-[3px] bg-[#c8c8c8]" />
    </div>
  );
}
